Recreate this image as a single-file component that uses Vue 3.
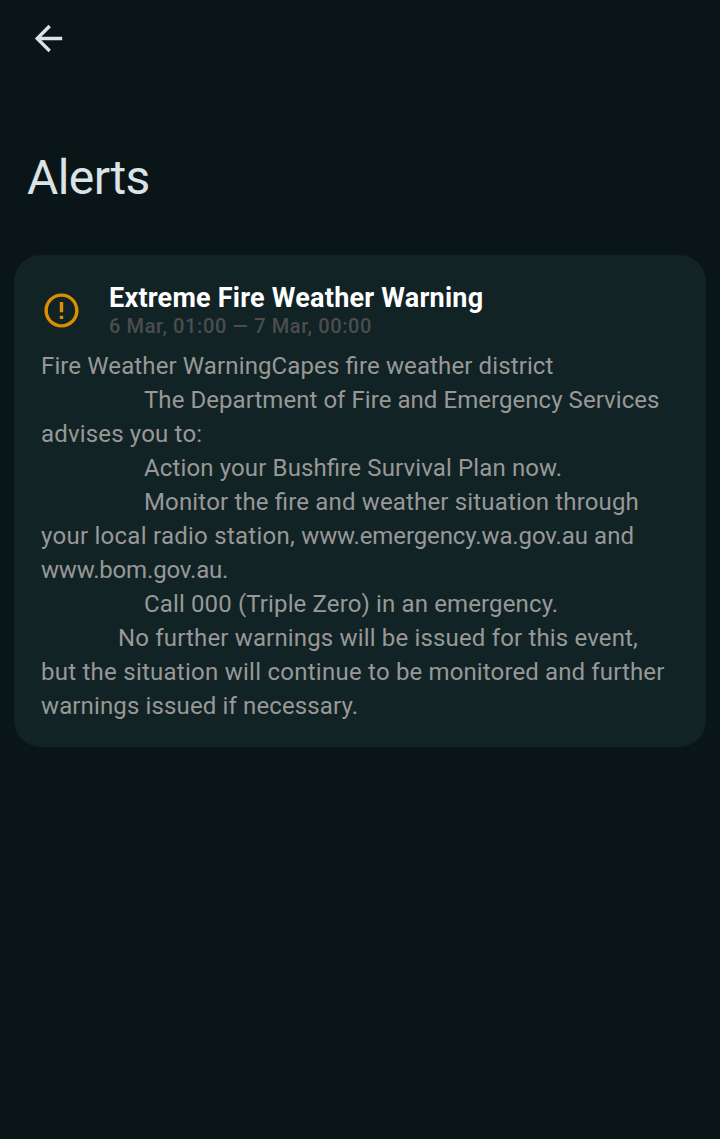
<script setup>
const lines = [
  { indent: '', parts: [['Fire Weather WarningCapes fire weather district', 0.12]] },
  { indent: 'deep', parts: [['The Department of Fire and Emergency Services', 0.05]] },
  { indent: '', parts: [['advises you to:', 0.17]] },
  { indent: 'deep', parts: [['Action your Bushfire Survival Plan now.', 0.13]] },
  { indent: 'deep', parts: [['Monitor the fire and weather situation through', 0.16]] },
  { indent: '', parts: [['your local radio station, ', 0.26], ['www.emergency.wa.gov.au', -0.11], [' and', 0.15]] },
  { indent: '', parts: [['www.bom.gov.au.', -0.17]] },
  { indent: 'deep', parts: [['Call 000 (Triple Zero) in an emergency.', 0.13]] },
  { indent: 'mid', parts: [['No further warnings will be issued for this event,', 0.16]] },
  { indent: '', parts: [['but the situation will continue to', 0.25], [' be monitored and further', 0.13]] },
  { indent: '', parts: [['warnings issued if necessary.', 0.13]] },
]
</script>

<template>
  <main class="screen">
    <header class="bar">
      <svg class="back" viewBox="0 0 24 24"><path d="M20 11H7.83l5.59-5.59L12 4l-8 8 8 8 1.41-1.41L7.83 13H20v-2z" /></svg>
    </header>
    <h1 class="title">Alerts</h1>
    <article class="card">
      <div class="head">
        <svg class="warn" viewBox="0 0 24 24"><path d="M11 15h2v2h-2zm0-8h2v6h-2zm.99-5C6.47 2 2 6.48 2 12s4.47 10 9.99 10C17.52 22 22 17.52 22 12S17.52 2 11.99 2zM12 20c-4.42 0-8-3.58-8-8s3.58-8 8-8 8 3.58 8 8-3.58 8-8 8z" /></svg>
        <div class="heading">
          <h2 class="name">Extreme Fire Weather Warning</h2>
          <p class="time">6 Mar, 01:00 — 7 Mar, 00:00</p>
        </div>
      </div>
      <div class="body">
        <p v-for="(line, i) in lines" :key="i" class="line" :class="line.indent"><span v-for="[text, track] in line.parts" :key="text" :style="{ letterSpacing: track + 'px' }">{{ text }}</span></p>
      </div>
    </article>
  </main>
</template>

<style>
body { background: #0a1517; }
</style>

<style scoped>
.screen { box-sizing: border-box; height: 1139px; padding: 0 14px; overflow: hidden; background: #0a1517; font-family: Roboto, sans-serif; }
.bar { height: 77px; padding: 18px 0 0 14px; box-sizing: border-box; }
.back { display: block; width: 41px; height: 41px; fill: #dae4e6; }
.title { margin: 73px 0 0 13px; height: 56px; line-height: 56px; font-size: 48px; font-weight: 400; letter-spacing: -.6px; color: #dae4e6; }
.card { box-sizing: border-box; margin-top: 49px; height: 492px; padding: 27px 27px 0; border-radius: 27px; background: #122325; }
.head { display: flex; gap: 27px; height: 67px; }
.warn { width: 41px; height: 41px; margin-top: 8px; fill: #d98f00; }
.name { margin: 0; line-height: 32px; font-size: 27px; font-weight: 700; letter-spacing: .23px; color: #fff; white-space: nowrap; }
.time { margin: 0; line-height: 24px; font-size: 20px; font-weight: 500; letter-spacing: .62px; color: #4c4d4e; white-space: nowrap; }
.line { margin: 0; height: 34px; line-height: 34px; font-size: 24px; font-feature-settings: "liga" 1; color: #989898; white-space: pre; }
.deep { padding-left: 103px; }
.mid { padding-left: 77px; }
</style>
